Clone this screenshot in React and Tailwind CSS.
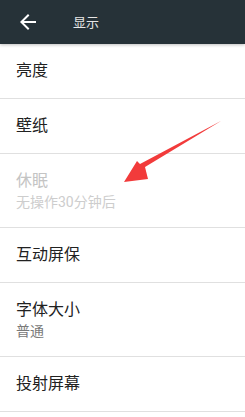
export default function App() {
    const rows = [
        { title: '亮度' },
        { title: '壁纸' },
        { title: '休眠', sub: '无操作30分钟后', disabled: true },
        { title: '互动屏保' },
        { title: '字体大小', sub: '普通' },
        { title: '投射屏幕' },
    ];

    return (
        <div
            className="relative w-[245px] h-[417px] overflow-hidden bg-white"
            style={{ fontFamily: 'Roboto, "Noto Sans CJK SC", sans-serif' }}
        >
            {/* Toolbar */}
            <div className="relative z-10 h-11 bg-[#263238] flex items-center shadow-[0_1px_3px_rgba(0,0,0,0.25)]">
                <svg viewBox="0 0 24 24" className="w-6 h-6 ml-4 fill-white">
                    <path d="M20 11H7.83l5.59-5.59L12 4l-8 8 8 8 1.41-1.41L7.83 13H20v-2z" />
                </svg>
                <span className="ml-[33px] text-[13px] text-[#e6e6e6] leading-none">显示</span>
            </div>

            {/* Settings list */}
            <div>
                {rows.map((row) => (
                    <div
                        key={row.title}
                        className={`border-b border-[#e0e0e0] px-4 ${row.sub ? 'pt-4 pb-[15px]' : 'py-4'}`}
                    >
                        <p className={`text-[16px] leading-[22px] ${row.disabled ? 'text-[#c4c4c4]' : 'text-[#212121]'}`}>
                            {row.title}
                        </p>
                        {row.sub && (
                            <p className={`text-[14px] leading-[20px] ${row.disabled ? 'text-[#cdcdcd]' : 'text-[#7a7a7a]'}`}>
                                {row.sub}
                            </p>
                        )}
                    </div>
                ))}
            </div>

            {/* Red annotation arrow */}
            <svg className="absolute left-0 top-0 pointer-events-none" width="245" height="417" viewBox="0 0 245 417">
                <polygon
                    points="221,121 145,167 148,179 124,182 137,161 140,164 219,122"
                    fill="#f23b3b"
                />
            </svg>
        </div>
    );
}
